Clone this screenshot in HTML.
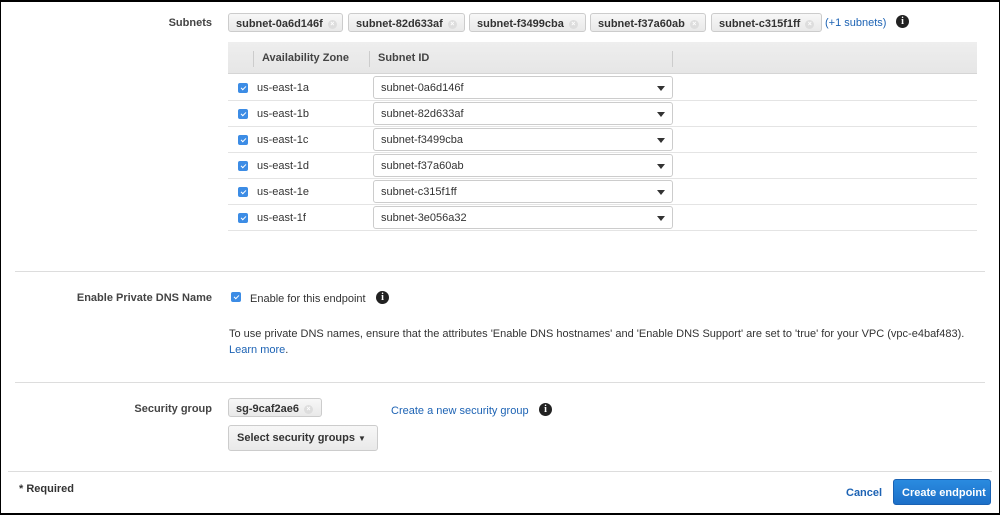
<!DOCTYPE html>
<html><head><meta charset="utf-8"><style>
*{margin:0;padding:0;box-sizing:border-box}
body{width:1000px;height:515px;overflow:hidden;background:#fff;font-family:"Liberation Sans",Arial,sans-serif;color:#333;position:relative}
.frame{position:absolute;left:0;top:0;width:1000px;height:515px;border:1px solid #000;border-top-width:2px;border-bottom-width:2px}
.a{position:absolute;white-space:nowrap}
.lbl{font-weight:bold;font-size:11px;color:#444;text-align:right}
.tok{position:absolute;top:13px;height:19px;border:1px solid #ccc;border-radius:3px;background:linear-gradient(#f7f7f7,#e9e9e9);font-size:11px;font-weight:bold;color:#333;padding:4px 0 0 7px}
.x{display:inline-block;width:9px;height:9px;border-radius:50%;background:#ddd;color:#fff;font-size:7px;line-height:9px;text-align:center;vertical-align:1px;margin-left:5px}
.info{position:absolute;width:13px;height:13px;border-radius:50%;background:#222;color:#fff;font:bold 10px/13px "Liberation Serif",serif;text-align:center}
.cb{position:absolute;width:10px;height:10px;border-radius:2px;background:#3c8ce5}
.cb:after{content:"";position:absolute;left:3.5px;top:1.5px;width:2px;height:4px;border:solid #fff;border-width:0 1.3px 1.3px 0;transform:rotate(45deg)}
.row{position:absolute;left:228px;width:749px;height:26px;border-bottom:1px solid #e4e4e4;font-size:11px}
.sel{position:absolute;left:145px;top:1px;width:300px;height:23px;border:1px solid #ccc;border-radius:3px;padding:5px 0 0 7px;background:#fff}
.sel:after{content:"";position:absolute;right:7px;top:9px;border:4px solid transparent;border-top:5px solid #333;border-bottom:0}
.hr{position:absolute;left:15px;width:970px;height:1px;background:#ddd}
.link{color:#1d63b4}
</style></head><body>
<div class="a lbl" style="left:150px;top:17px;width:62px">Subnets</div>
<div class="tok" style="left:228px;width:115px">subnet-0a6d146f<span class="x">×</span></div>
<div class="tok" style="left:348px;width:117px">subnet-82d633af<span class="x">×</span></div>
<div class="tok" style="left:469px;width:117px">subnet-f3499cba<span class="x">×</span></div>
<div class="tok" style="left:590px;width:116px">subnet-f37a60ab<span class="x">×</span></div>
<div class="tok" style="left:711px;width:111px">subnet-c315f1ff<span class="x">×</span></div>
<div class="a link" style="left:825px;top:17px;font-size:11px">(+1 subnets)</div>
<div class="info" style="left:896px;top:15px">i</div>

<div class="a" style="left:228px;top:42px;width:749px;height:32px;background:linear-gradient(#eeeeee,#e6e6e6);border-bottom:1px solid #d5d5d5"></div>
<div class="a" style="left:253px;top:51px;width:1px;height:16px;background:#ccc"></div>
<div class="a" style="left:369px;top:51px;width:1px;height:16px;background:#ccc"></div>
<div class="a" style="left:672px;top:51px;width:1px;height:16px;background:#ccc"></div>
<div class="a" style="left:262px;top:52px;font-size:11px;font-weight:bold;color:#444">Availability Zone</div>
<div class="a" style="left:378px;top:52px;font-size:11px;font-weight:bold;color:#444">Subnet ID</div>

<div class="row" style="top:75px"><div class="cb" style="left:10px;top:8px"></div><div class="a" style="left:29px;top:7px">us-east-1a</div><div class="sel">subnet-0a6d146f</div></div>
<div class="row" style="top:101px"><div class="cb" style="left:10px;top:8px"></div><div class="a" style="left:29px;top:7px">us-east-1b</div><div class="sel">subnet-82d633af</div></div>
<div class="row" style="top:127px"><div class="cb" style="left:10px;top:8px"></div><div class="a" style="left:29px;top:7px">us-east-1c</div><div class="sel">subnet-f3499cba</div></div>
<div class="row" style="top:153px"><div class="cb" style="left:10px;top:8px"></div><div class="a" style="left:29px;top:7px">us-east-1d</div><div class="sel">subnet-f37a60ab</div></div>
<div class="row" style="top:179px"><div class="cb" style="left:10px;top:8px"></div><div class="a" style="left:29px;top:7px">us-east-1e</div><div class="sel">subnet-c315f1ff</div></div>
<div class="row" style="top:205px"><div class="cb" style="left:10px;top:8px"></div><div class="a" style="left:29px;top:7px">us-east-1f</div><div class="sel">subnet-3e056a32</div></div>

<div class="hr" style="top:271px"></div>
<div class="a lbl" style="left:40px;top:292px;width:172px">Enable Private DNS Name</div>
<div class="cb" style="left:231px;top:292px"></div>
<div class="a" style="left:250px;top:293px;font-size:11px">Enable for this endpoint</div>
<div class="info" style="left:376px;top:291px">i</div>
<div class="a" style="left:229px;top:328px;font-size:11px">To use private DNS names, ensure that the attributes 'Enable DNS hostnames' and 'Enable DNS Support' are set to 'true' for your VPC (vpc-e4baf483).</div>
<div class="a" style="left:229px;top:344px;font-size:11px"><span class="link">Learn more</span>.</div>

<div class="hr" style="top:382px"></div>
<div class="a lbl" style="left:100px;top:403px;width:112px">Security group</div>
<div class="tok" style="left:228px;top:398px;width:94px;height:19px">sg-9caf2ae6<span class="x">×</span></div>
<div class="a link" style="left:391px;top:405px;font-size:11px">Create a new security group</div>
<div class="info" style="left:539px;top:403px">i</div>
<div class="a" style="left:228px;top:425px;width:150px;height:26px;border:1px solid #ccc;border-radius:3px;background:linear-gradient(#f7f7f7,#e9e9e9);font-size:11px;font-weight:bold;padding:6px 0 0 8px">Select security groups <span style="font-size:8px">▼</span></div>

<div class="hr" style="top:471px;left:8px;width:984px"></div>
<div class="a" style="left:19px;top:483px;font-size:11px;font-weight:bold">* Required</div>
<div class="a link" style="left:846px;top:487px;font-size:11px;font-weight:bold">Cancel</div>
<div class="a" style="left:893px;top:479px;width:98px;height:26px;border-radius:3px;background:linear-gradient(#2a8be0,#1c6fc8);border:1px solid #1a62b3;color:#fff;font-size:11px;font-weight:bold;padding:7px 0 0 8px">Create endpoint</div>
<div class="frame"></div>
</body></html>
